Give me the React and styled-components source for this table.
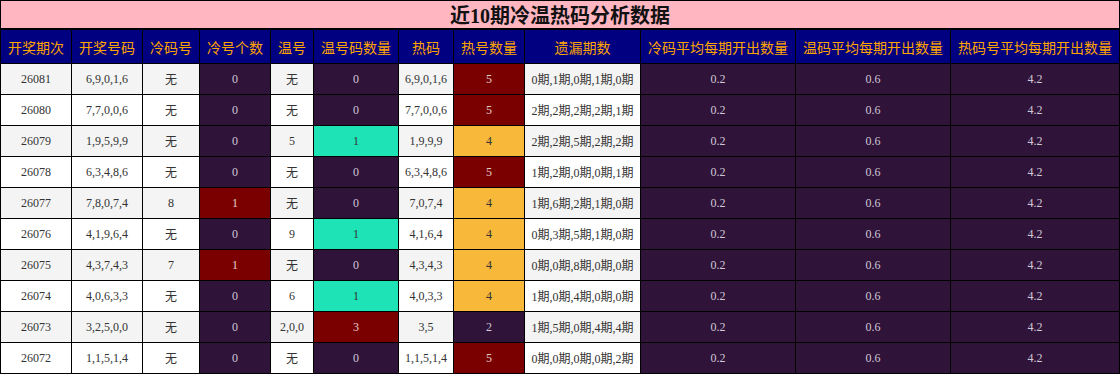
import React from 'react';
import styled, { createGlobalStyle } from 'styled-components';

const GlobalStyle = createGlobalStyle`
  html, body {
    margin: 0;
    padding: 0;
    background: #fff;
  }
`;

const tones = {
  plain: { bg: 'inherit', fg: '#333' },
  purple: { bg: '#2f1339', fg: '#d0c8d6' },
  red: { bg: '#7a0000', fg: '#e4d0d0' },
  teal: { bg: '#1de3b7', fg: '#333' },
  orange: { bg: '#f8b93a', fg: '#333' },
};

const Board = styled.div`
  width: 1120px;
  font-family: "Liberation Serif", "Noto Sans CJK SC", serif;
`;

const Title = styled.div`
  height: 27px;
  border: 1px solid #000;
  background: #ffb6c1;
  display: flex;
  align-items: center;
  justify-content: center;
  font-size: 20px;
  font-weight: bold;
  color: #111;
`;

const Sheet = styled.div`
  display: grid;
  grid-template-columns: 70px 70px 56px 70px 42px 84px 54px 70px 115px 154px 154px 168px;
  grid-template-rows: 33px;
  grid-auto-rows: 30px;
  gap: 1px;
  padding: 1px;
  background: #000;
`;

const HeadCell = styled.div`
  background: #000080;
  color: #ffa500;
  font-family: "Noto Sans CJK SC", sans-serif;
  font-size: 14px;
  display: flex;
  align-items: center;
  justify-content: center;
  white-space: nowrap;
`;

const Row = styled.div`
  display: contents;
  --row-bg: ${(p) => (p.$odd ? '#f4f4f4' : '#ffffff')};
`;

const Cell = styled.div`
  background: ${(p) => (p.$tone === 'plain' ? 'var(--row-bg)' : tones[p.$tone].bg)};
  color: ${(p) => tones[p.$tone].fg};
  font-size: 12px;
  display: flex;
  align-items: center;
  justify-content: center;
  white-space: nowrap;
`;

const headers = [
  '开奖期次', '开奖号码', '冷码号', '冷号个数', '温号', '温号码数量',
  '热码', '热号数量', '遗漏期数', '冷码平均每期开出数量', '温码平均每期开出数量', '热码号平均每期开出数量',
];

const draws = [
  ['26081', '6,9,0,1,6', '无', ['0', 'purple'], '无', ['0', 'purple'], '6,9,0,1,6', ['5', 'red'], '0期,1期,0期,1期,0期'],
  ['26080', '7,7,0,0,6', '无', ['0', 'purple'], '无', ['0', 'purple'], '7,7,0,0,6', ['5', 'red'], '2期,2期,2期,2期,1期'],
  ['26079', '1,9,5,9,9', '无', ['0', 'purple'], '5', ['1', 'teal'], '1,9,9,9', ['4', 'orange'], '2期,2期,5期,2期,2期'],
  ['26078', '6,3,4,8,6', '无', ['0', 'purple'], '无', ['0', 'purple'], '6,3,4,8,6', ['5', 'red'], '1期,2期,0期,0期,1期'],
  ['26077', '7,8,0,7,4', '8', ['1', 'red'], '无', ['0', 'purple'], '7,0,7,4', ['4', 'orange'], '1期,6期,2期,1期,0期'],
  ['26076', '4,1,9,6,4', '无', ['0', 'purple'], '9', ['1', 'teal'], '4,1,6,4', ['4', 'orange'], '0期,3期,5期,1期,0期'],
  ['26075', '4,3,7,4,3', '7', ['1', 'red'], '无', ['0', 'purple'], '4,3,4,3', ['4', 'orange'], '0期,0期,8期,0期,0期'],
  ['26074', '4,0,6,3,3', '无', ['0', 'purple'], '6', ['1', 'teal'], '4,0,3,3', ['4', 'orange'], '1期,0期,4期,0期,0期'],
  ['26073', '3,2,5,0,0', '无', ['0', 'purple'], '2,0,0', ['3', 'red'], '3,5', ['2', 'purple'], '1期,5期,0期,4期,4期'],
  ['26072', '1,1,5,1,4', '无', ['0', 'purple'], '无', ['0', 'purple'], '1,1,5,1,4', ['5', 'red'], '0期,0期,0期,0期,2期'],
];

const averages = ['0.2', '0.6', '4.2'];

const App = () => (
  <>
    <GlobalStyle />
    <Board>
      <Title>近10期冷温热码分析数据</Title>
      <Sheet>
        {headers.map((h) => (
          <HeadCell key={h}>{h}</HeadCell>
        ))}
        {draws.map((row, i) => (
          <Row key={row[0]} $odd={i % 2 === 0}>
            {row.map((v, j) =>
              Array.isArray(v) ? (
                <Cell key={j} $tone={v[1]}>{v[0]}</Cell>
              ) : (
                <Cell key={j} $tone="plain">{v}</Cell>
              )
            )}
            {averages.map((a, j) => (
              <Cell key={`avg${j}`} $tone="purple">{a}</Cell>
            ))}
          </Row>
        ))}
      </Sheet>
    </Board>
  </>
);

export default App;
